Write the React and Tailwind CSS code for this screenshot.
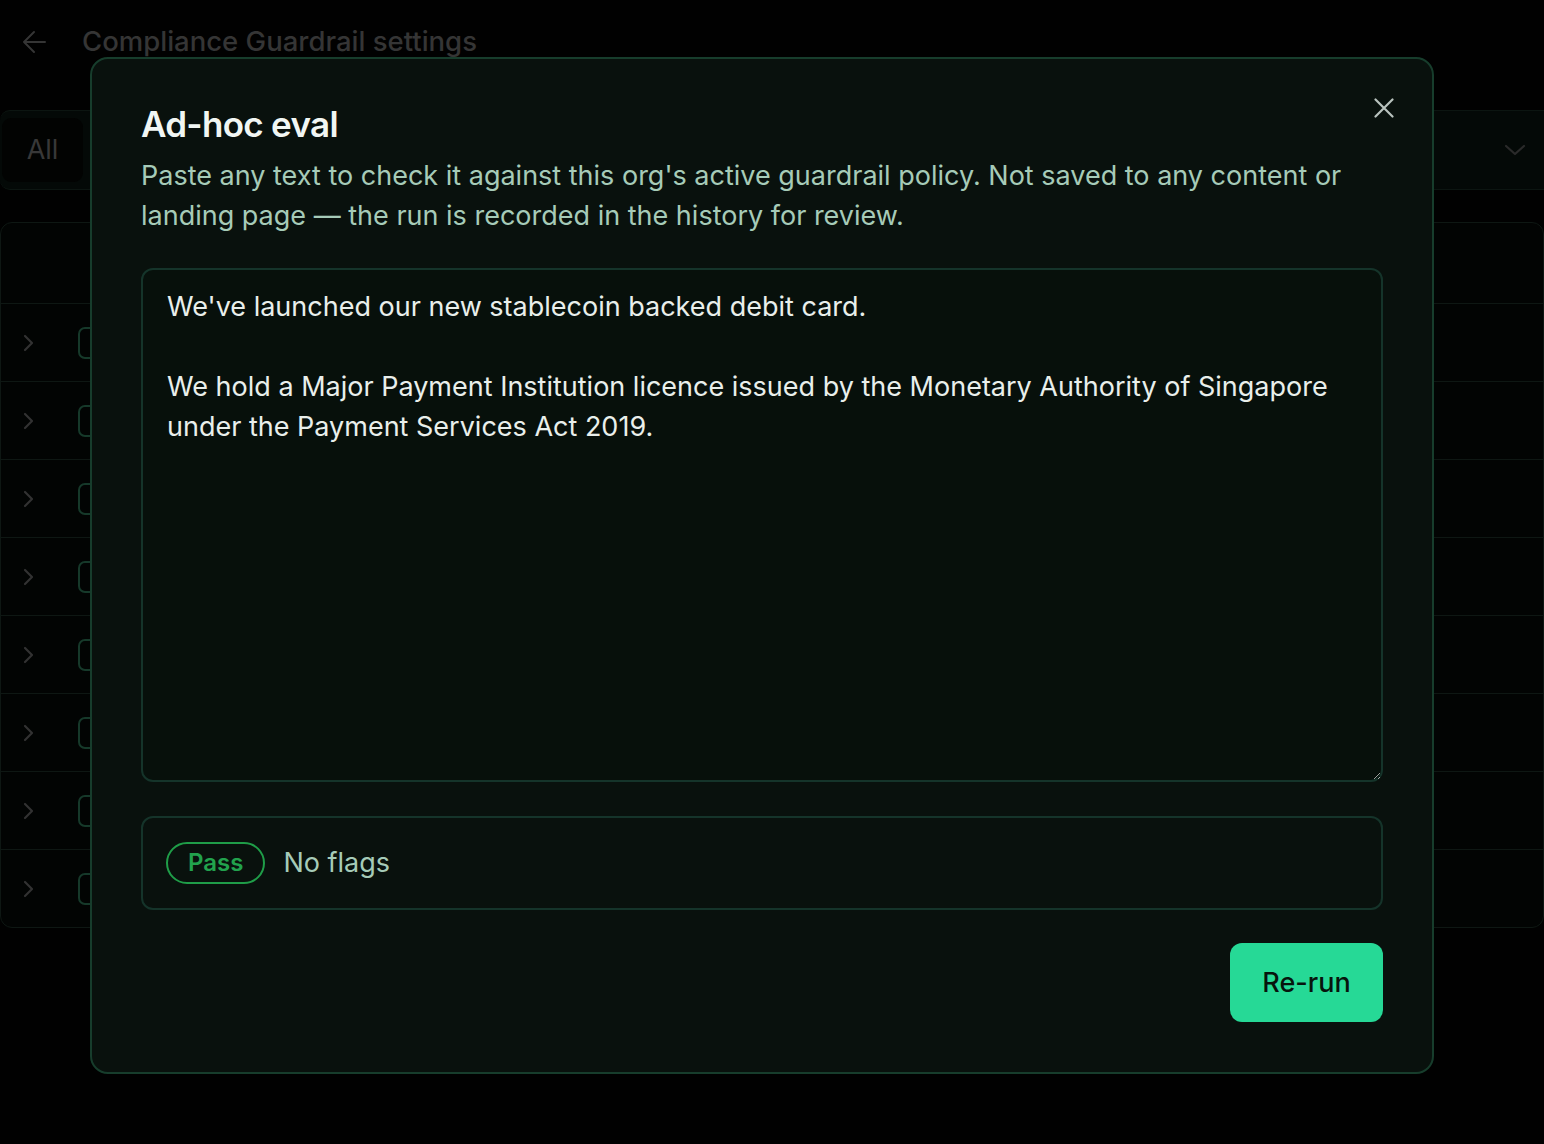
import React from "react";

function ChevronRight() {
  return (
    <svg width="14" height="18" viewBox="0 0 14 18" fill="none">
      <path d="M4 2l7 7-7 7" stroke="#323232" strokeWidth="2.2" strokeLinecap="round" strokeLinejoin="round" />
    </svg>
  );
}

function Row() {
  return (
    <div className="flex h-[78px] items-center border-t border-[#0e1713] pl-[20px]">
      <ChevronRight />
      <div className="ml-[43px] h-[32px] w-[32px] rounded-[7px] border-2 border-[#16392a]" />
    </div>
  );
}

export default function App() {
  const text =
    "We've launched our new stablecoin backed debit card.\n\nWe hold a Major Payment Institution licence issued by the Monetary Authority of Singapore under the Payment Services Act 2019.";
  return (
    <div className="relative min-h-[1144px] overflow-hidden bg-[#010101] font-['Inter','Noto_Sans',sans-serif]">
      {/* Background page */}
      <div className="flex h-[84px] items-center pl-[22px]">
        <svg width="24" height="24" viewBox="0 0 24 24" fill="none">
          <path d="M12 2L2 12l10 10M2 12h21" stroke="#353535" strokeWidth="2" strokeLinecap="round" strokeLinejoin="round" />
        </svg>
        <div className="ml-[36px] text-[27.5px] font-medium text-[#353535]">Compliance Guardrail settings</div>
      </div>
      <div className="mt-[26px] flex h-[80px] items-center justify-between rounded-l-[10px] border-y border-[#0c1511] bg-[#040907] pl-[2px] pr-[18px]">
        <div className="flex h-[64px] w-[81px] items-center justify-center rounded-[9px] bg-[#020302] text-[27px] text-[#383838]">
          All
        </div>
        <svg width="22" height="14" viewBox="0 0 22 14" fill="none">
          <path d="M2 3l9 8 9-8" stroke="#2a2a2a" strokeWidth="2.2" strokeLinecap="round" strokeLinejoin="round" />
        </svg>
      </div>
      <div className="mt-[32px] rounded-[12px] border border-[#0e1713] bg-[#020403]">
        <div className="h-[80px]" />
        {Array.from({ length: 8 }).map((_, i) => (
          <Row key={i} />
        ))}
      </div>

      {/* Modal */}
      <div className="absolute left-[90px] top-[57px] w-[1344px] rounded-[18px] border-2 border-[#173d2c] bg-[#09110d] px-[49px] pb-[50px] pt-[47px]">
        <button className="absolute right-[37px] top-[38px] flex h-[22px] w-[22px] items-center justify-center">
          <svg width="20" height="20" viewBox="0 0 20 20" fill="none">
            <path d="M1.5 1.5l17 17M18.5 1.5l-17 17" stroke="#b9c3be" strokeWidth="2.2" strokeLinecap="round" />
          </svg>
        </button>
        <h2 className="text-[35px] font-semibold leading-[36px] tracking-[-0.02em] text-[#f1f6f3]">Ad-hoc eval</h2>
        <p className="mt-[14px] text-[27px] leading-[40px] text-[#a6cbb8]">
          Paste any text to check it against this org's active guardrail policy. Not saved to any content or landing page — the run is recorded in the history for review.
        </p>
        <textarea
          readOnly
          defaultValue={text}
          className="mt-[32px] block h-[514px] w-full resize-y rounded-[12px] border-2 border-[#15342a] bg-[#07100b] px-[24px] py-[17px] text-[27px] leading-[40px] text-[#e9efeb] outline-none"
        />
        <div className="mt-[34px] flex h-[94px] items-center rounded-[12px] border-2 border-[#15342a] px-[23px]">
          <span className="flex h-[42px] items-center rounded-full border-2 border-[#1f9d48] px-[20px] text-[24px] font-semibold text-[#22a24d]">
            Pass
          </span>
          <span className="ml-[18px] text-[27px] text-[#a6cbb8]">No flags</span>
        </div>
        <div className="mt-[33px] flex justify-end">
          <button className="flex h-[79px] w-[153px] items-center justify-center rounded-[12px] bg-[#26d996] pt-[2px] text-[27px] font-medium text-[#07140d]">
            Re-run
          </button>
        </div>
      </div>
    </div>
  );
}
